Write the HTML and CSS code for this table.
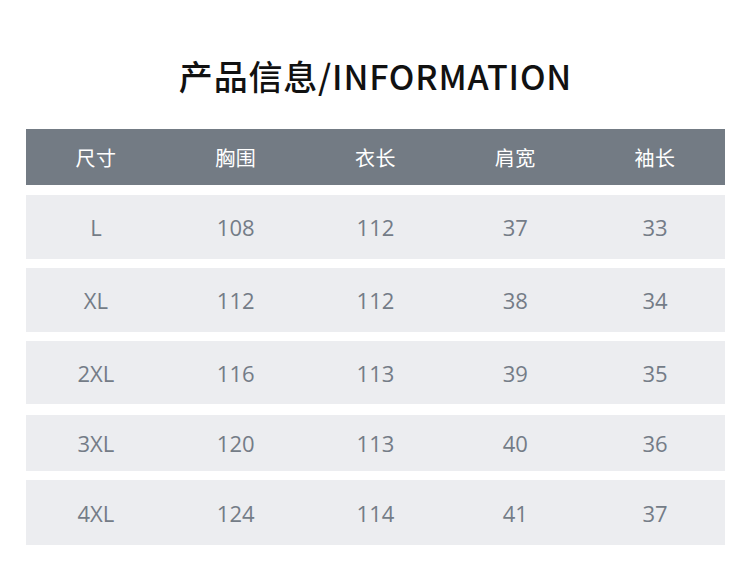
FILE: index.html
```html
<!DOCTYPE html>
<html lang="zh">
<head>
<meta charset="utf-8">
<link rel="stylesheet" href="styles.css">
</head>
<body>
<div class="page">
  <h1 class="title">产品信息/INFORMATION</h1>
  <div class="table">
    <div class="row head"><span>尺寸</span><span>胸围</span><span>衣长</span><span>肩宽</span><span>袖长</span></div>
    <div class="row r1"><span>L</span><span>108</span><span>112</span><span>37</span><span>33</span></div>
    <div class="row r2"><span>XL</span><span>112</span><span>112</span><span>38</span><span>34</span></div>
    <div class="row r3"><span>2XL</span><span>116</span><span>113</span><span>39</span><span>35</span></div>
    <div class="row r4"><span>3XL</span><span>120</span><span>113</span><span>40</span><span>36</span></div>
    <div class="row r5"><span>4XL</span><span>124</span><span>114</span><span>41</span><span>37</span></div>
  </div>
</div>
</body>
</html>
```
FILE: styles.css
```css
html, body {
  margin: 0;
  padding: 0;
  background: #ffffff;
}
.page {
  width: 750px;
  height: 568px;
  padding: 0 25px 0 26px;
  box-sizing: border-box;
}
.title {
  margin: 0;
  height: 129px;
  box-sizing: border-box;
  padding-top: 54px;
  text-align: center;
  font-family: "Noto Sans CJK SC", "Noto Sans", sans-serif;
  font-weight: 500;
  font-size: 34px;
  line-height: 44px;
  color: #111111;
  letter-spacing: 0.8px;
}
.table {
  display: flex;
  flex-direction: column;
  gap: 9px;
}
.row {
  display: grid;
  grid-template-columns: repeat(5, 1fr);
  align-items: center;
  background: #ecedf0;
  height: 64px;
  font-family: "Open Sans", "Noto Sans CJK SC", sans-serif;
  font-size: 22px;
  color: #747c87;
  letter-spacing: 0;
  box-sizing: border-box;
}
.row span {
  text-align: center;
}
.head {
  background: #737b84;
  height: 56px;
  color: #ffffff;
  font-family: "Noto Sans CJK SC", sans-serif;
  font-size: 20px;
  letter-spacing: 0.5px;
  margin-bottom: 1px;
}
.r3 { height: 63px; margin-bottom: 2px; }
.r4 { height: 56px; }
.r5 { height: 65px; }
```
